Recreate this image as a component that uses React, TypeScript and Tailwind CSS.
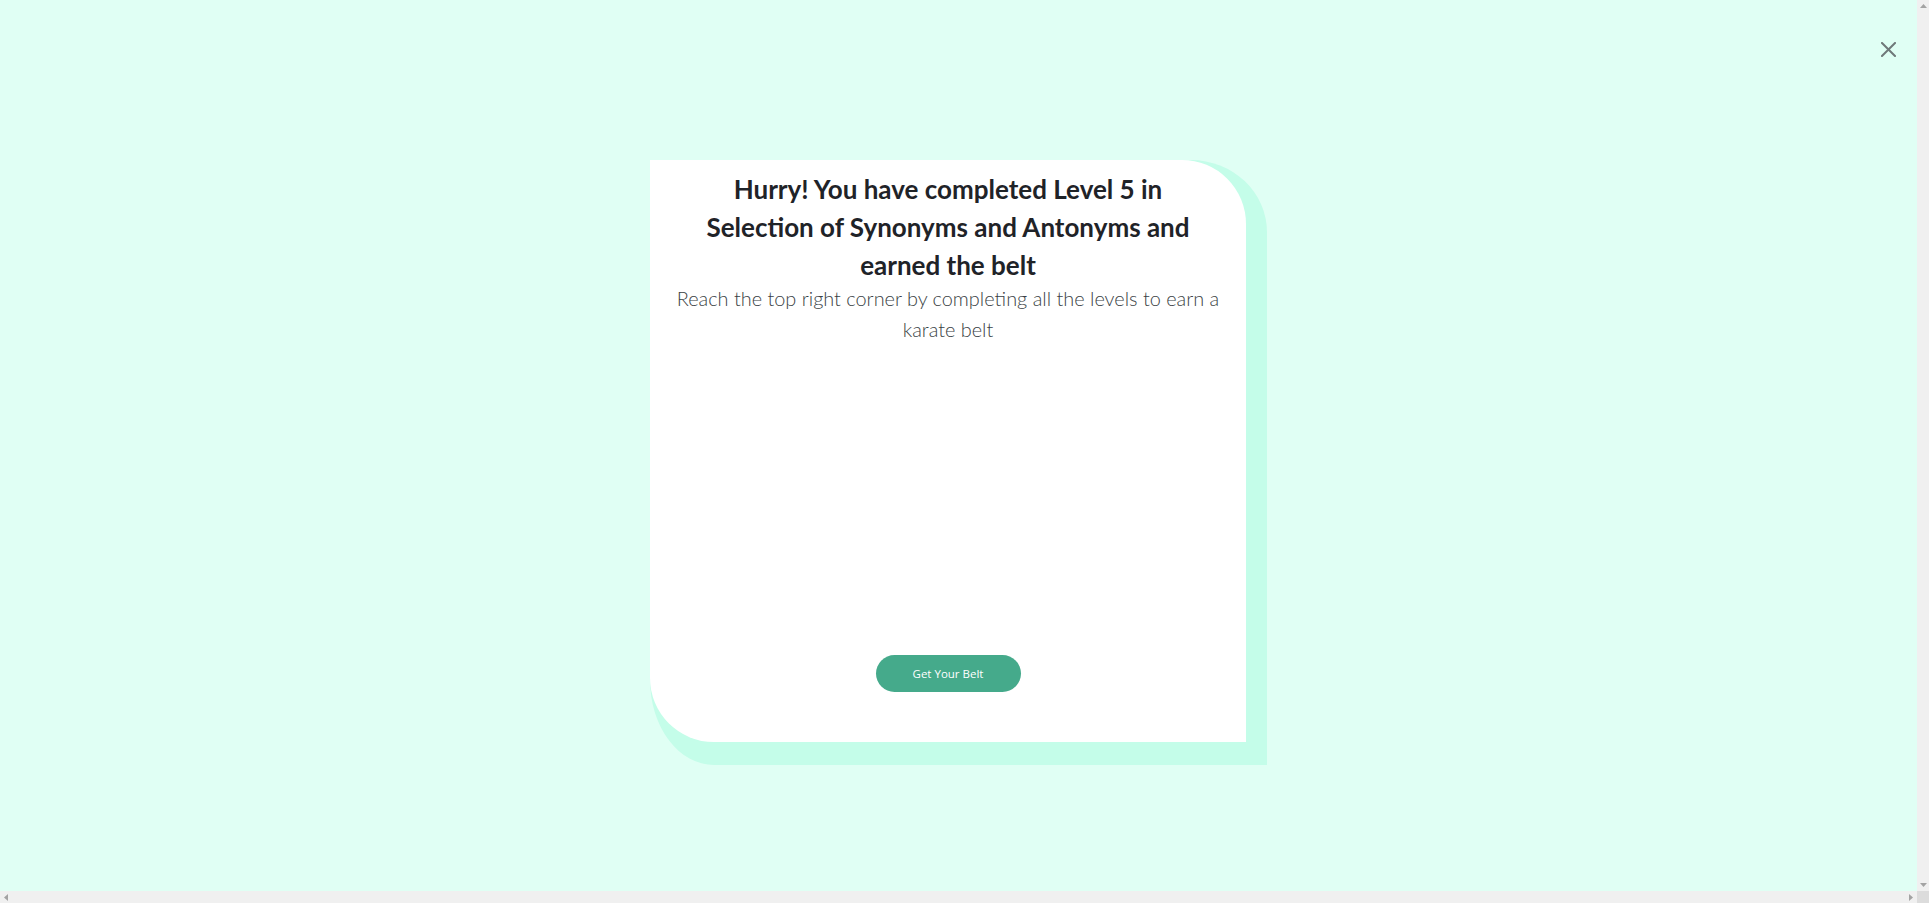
import React from "react";

export default function App() {
  return (
    <div className="w-[1929px] h-[903px] flex flex-col overflow-hidden">
      <div className="flex flex-1 min-h-0">
        <main className="flex-1 relative bg-[#e0fff4] flex justify-center pt-[160px]">
          <button className="absolute top-[42px] right-[21px] w-[15px] h-[15px]" aria-label="close">
            <svg width="15" height="15" viewBox="0 0 15 15">
              <path d="M1 1 L14 14 M14 1 L1 14" stroke="#6f7979" strokeWidth="2" strokeLinecap="square" />
            </svg>
          </button>
          <div className="grid w-[617px] h-[605px] self-start">
            <div className="[grid-area:1/1] bg-[#c4fde9] [border-radius:0_76px_0_64px/0_72px_0_85px]" />
            <div className="[grid-area:1/1] w-[596px] h-[582px] bg-white rounded-tr-[64px] rounded-bl-[64px] flex flex-col items-center pt-[10px] px-[22px]">
              <h1 className="max-w-[500px] text-center text-[26px] leading-[38px] font-bold text-[#1f2328] font-['Lato',sans-serif]">
                Hurry! You have completed Level 5 in Selection of Synonyms and Antonyms and earned the belt
              </h1>
              <p className="-mt-[1px] text-center text-[19.9px] leading-[30.5px] font-light text-[#3a3f45] font-['Lato',sans-serif]">
                Reach the top right corner by completing all the levels to earn a karate belt
              </p>
              <button className="mt-auto mb-[50px] w-[145px] h-[37px] rounded-full bg-[#45aa8b] text-white text-[11.5px] font-medium font-['Open_Sans',sans-serif]">
                Get Your Belt
              </button>
            </div>
          </div>
        </main>
        <div className="w-[12px] bg-[#f0f0f0] flex flex-col justify-between items-center py-[4px]">
          <svg width="7" height="4" viewBox="0 0 7 4"><path d="M0 4 L3.5 0 L7 4 Z" fill="#a3a3a3" /></svg>
          <svg width="7" height="4" viewBox="0 0 7 4"><path d="M0 0 L3.5 4 L7 0 Z" fill="#a3a3a3" /></svg>
        </div>
      </div>
      <div className="h-[12px] flex">
        <div className="flex-1 bg-[#f0f0f0] flex justify-between items-center px-[4px]">
          <svg width="4" height="7" viewBox="0 0 4 7"><path d="M4 0 L0 3.5 L4 7 Z" fill="#a3a3a3" /></svg>
          <svg width="4" height="7" viewBox="0 0 4 7"><path d="M0 0 L4 3.5 L0 7 Z" fill="#a3a3a3" /></svg>
        </div>
        <div className="w-[12px] bg-[#dcdcdc]" />
      </div>
    </div>
  );
}
